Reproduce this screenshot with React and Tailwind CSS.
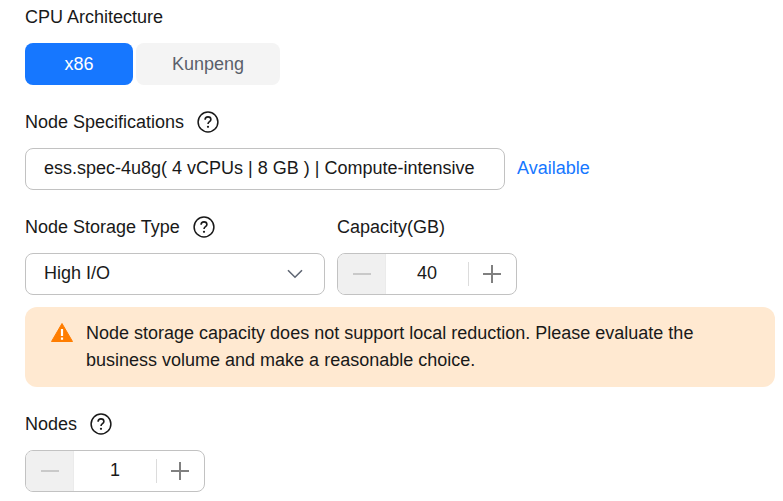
const Help = () => (
  <svg width="22" height="22" viewBox="0 0 22 22" fill="none" stroke="#191919" className="shrink-0">
    <circle cx="11" cy="11" r="9.9" strokeWidth="1.5" />
    <path d="M8.1 8.7c0-1.7 1.2-2.8 2.9-2.8s2.9 1.1 2.9 2.6c0 2.2-2.9 2.2-2.9 4.5" strokeWidth="1.6" />
    <circle cx="11" cy="15.8" r="1.1" fill="#191919" stroke="none" />
  </svg>
);

const Stepper = ({ value }) => (
  <div className="flex h-[42px] w-[180px] items-center overflow-hidden rounded-[8px] border border-[#c2c2c2]">
    <div className="flex h-full w-[48px] items-center justify-center border-r border-[#ebebeb] bg-[#f0f0f0]">
      <span className="h-[2px] w-[18px] bg-[#c9c9c9]" />
    </div>
    <div className="flex h-full flex-1 items-center justify-center pb-[2px] text-[#191919]">{value}</div>
    <span className="h-[24px] w-px bg-[#dcdcdc]" />
    <div className="relative flex h-full w-[47px] items-center justify-center pr-px">
      <span className="h-[2px] w-[18px] bg-[#808080]" />
      <span className="absolute h-[18px] w-[2px] bg-[#808080]" />
    </div>
  </div>
);

const Label = ({ children, help }) => (
  <div className="flex h-[22px] items-center gap-[13px] text-[#191919]">
    <span>{children}</span>
    {help && <Help />}
  </div>
);

export default function App() {
  return (
    <div className="h-[501px] w-[783px] overflow-hidden bg-white px-[25px] pt-[6px] text-[18px] font-['Liberation_Sans',Arial,sans-serif] text-[#191919]">
      <Label>CPU Architecture</Label>

      <div className="mt-[15px] flex gap-[3px]">
        <button className="h-[42px] w-[108px] rounded-[8px] bg-[#1677ff] text-white">x86</button>
        <button className="h-[42px] w-[144px] rounded-[8px] bg-[#f4f4f4] text-[#5a5f6b]">Kunpeng</button>
      </div>

      <div className="mt-[26px]">
        <Label help>Node Specifications</Label>
      </div>
      <div className="mt-[15px] flex items-center gap-[12px]">
        <div className="flex h-[42px] w-[480px] items-center rounded-[8px] border border-[#c2c2c2] px-[18px] pb-[2px]">
          ess.spec-4u8g( 4 vCPUs | 8 GB ) | Compute-intensive
        </div>
        <span className="pb-[2px] text-[#1677ff]">Available</span>
      </div>

      <div className="mt-[26px] flex gap-[12px]">
        <div className="w-[300px]">
          <Label help>Node Storage Type</Label>
          <div className="mt-[15px] flex h-[42px] items-center justify-between rounded-[8px] border border-[#c2c2c2] pl-[18px] pr-[21px]">
            <span className="pb-[2px]">High I/O</span>
            <svg width="16" height="10" viewBox="0 0 16 10" fill="none" stroke="#5f6673" strokeWidth="1.6" className="mb-px">
              <path d="M1 1.2l7 7 7-7" />
            </svg>
          </div>
        </div>
        <div>
          <Label>Capacity(GB)</Label>
          <div className="mt-[15px]">
            <Stepper value="40" />
          </div>
        </div>
      </div>

      <div className="mt-[12px] flex h-[80px] w-[750px] gap-[13px] rounded-[12px] bg-[#ffe9d1] px-[26px] py-[13px] leading-[27px]">
        <svg width="22" height="20" viewBox="0 0 22 20" className="mt-[3px] shrink-0">
          <path d="M11 0.5L21.5 18.5H0.5Z" fill="#ff7d00" stroke="#ff7d00" strokeLinejoin="round" />
          <path d="M9.9 6h2.2v7h-2.2zM9.9 14.6h2.2v2.2h-2.2z" fill="#fff" />
        </svg>
        <p>Node storage capacity does not support local reduction. Please evaluate the business volume and make a reasonable choice.</p>
      </div>

      <div className="mt-[26px]">
        <Label help>Nodes</Label>
      </div>
      <div className="mt-[15px]">
        <Stepper value="1" />
      </div>
    </div>
  );
}
